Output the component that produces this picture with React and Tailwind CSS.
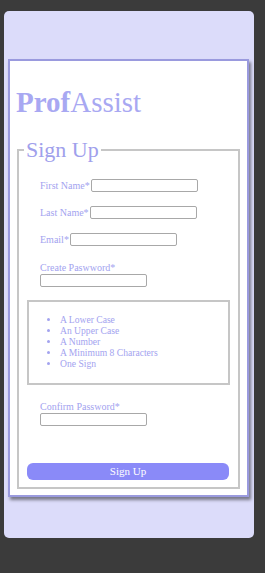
export default function App() {
  const rules = ['A Lower Case', 'An Upper Case', 'A Number', 'A Minimum 8 Characters', 'One Sign'];
  const inputCls = 'h-[13px] w-[107px] rounded-[2px] border border-[#a8a8a8] bg-white';

  return (
    <div className="min-h-screen bg-[#3b3b3b] pl-[4px] pt-[11px] font-['Liberation_Serif',serif] text-[#a3a3ef]">
      <div className="h-[527px] w-[250px] rounded-[5px] bg-[#dcdcfa] px-[4px] pt-[48px]">
        <div className="w-[241px] border-2 border-[#9a9ade] bg-white pb-[6px] shadow-[2px_3px_3px_rgba(0,0,0,0.45)]">
          <h1 className="ml-[6px] mt-[25px] text-[29px] leading-[33px] text-[#a8a8f2]">
            <span className="font-bold">Prof</span>Assist
          </h1>

          <fieldset className="mx-[7px] mt-[19px] border-2 border-[#c6c6c6]">
            <legend className="ml-[5px] px-[2px] text-[22px] leading-[24px] text-[#a0a0ec]">Sign Up</legend>
            <div className="px-[8px] pb-[7px] pt-[17px] text-[10px] leading-[11px]">
              <div className="pl-[13px]">
                <div className="flex items-center gap-[1px]">
                  <span>First Name*</span>
                  <input className={inputCls} />
                </div>
                <div className="mt-[14px] flex items-center gap-[1px]">
                  <span>Last Name*</span>
                  <input className={inputCls} />
                </div>
                <div className="mt-[14px] flex items-center gap-[1px]">
                  <span>Email*</span>
                  <input className={inputCls} />
                </div>
                <div className="mt-[16px]">
                  <div>Create Paswword*</div>
                  <input className={`${inputCls} mt-[1px] block`} />
                </div>
              </div>

              <div className="mt-[13px] border-2 border-[#c6c6c6] pb-[14px] pt-[12px]">
                <ul className="list-disc pl-[31px] text-[9.6px]">
                  {rules.map((r) => (
                    <li key={r}>{r}</li>
                  ))}
                </ul>
              </div>

              <div className="mt-[16px] pl-[13px]">
                <div>Confirm Password*</div>
                <input className={`${inputCls} mt-[1px] block`} />
              </div>

              <button className="mt-[37px] block h-[17px] w-[202px] rounded-[6px] bg-[#8a8af8] text-[11px] text-white">
                Sign Up
              </button>
            </div>
          </fieldset>
        </div>
      </div>
    </div>
  );
}
